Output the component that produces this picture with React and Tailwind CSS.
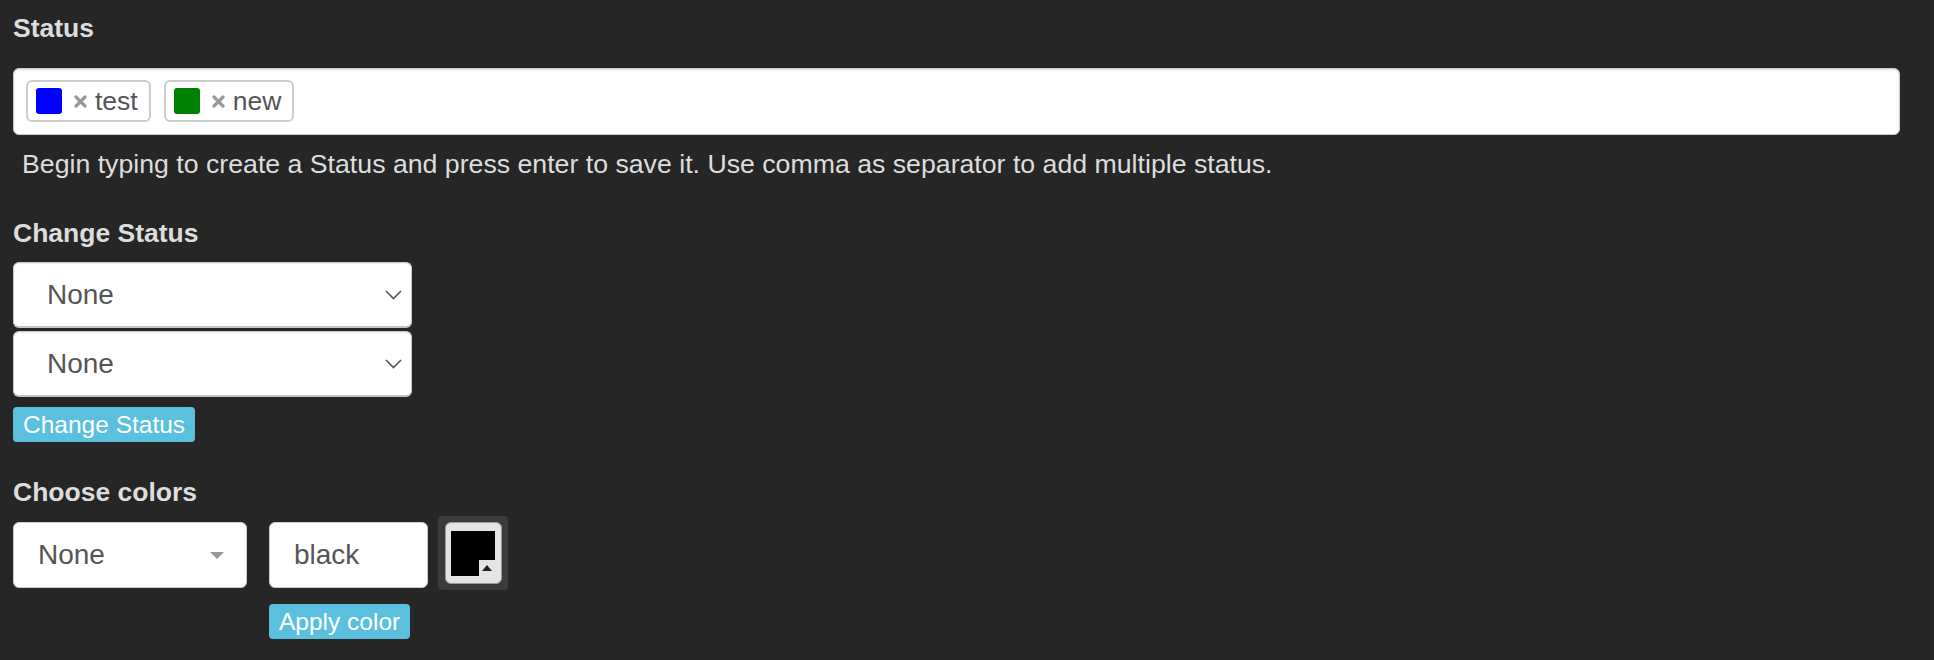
import React from 'react';

const font = "font-['Liberation_Sans',Arial,Helvetica,sans-serif]";

const Tag = ({ color, label }) => (
    <div className="flex h-[42px] items-center rounded-[6px] border-2 border-[#cccccc] bg-white pl-[8px] pr-[11px]">
        <span className={`h-[26px] w-[26px] rounded-[3px] ${color}`}></span>
        <svg width="13" height="13" viewBox="0 0 13 13" className="ml-[12px]">
            <path d="M2 2 L11 11 M11 2 L2 11" stroke="#999999" strokeWidth="3.2" strokeLinecap="round" />
        </svg>
        <span className="ml-[8px] text-[26.5px] leading-none text-[#555555]">{label}</span>
    </div>
);

const Chevron = () => (
    <svg width="17" height="10" viewBox="0 0 17 10" className="shrink-0">
        <polyline points="1,1 8.5,8.5 16,1" fill="none" stroke="#555555" strokeWidth="1.6" />
    </svg>
);

const StatusSelect = () => (
    <div className="flex h-[66px] w-[399px] items-center justify-between rounded-[6px] border border-[#cccccc] border-b-2 border-b-[#c4c4c4] bg-white pl-[33px] pr-[9px] shadow-[inset_0_1px_1px_rgba(0,0,0,0.08)]">
        <span className="text-[28px] leading-none text-[#555555]">None</span>
        <Chevron />
    </div>
);

const InfoButton = ({ children }) => (
    <button className="h-[35px] rounded-[4px] bg-[#5bc0de] px-[10px] text-[24.5px] leading-[35px] text-white">
        {children}
    </button>
);

const ColorPicker = () => (
    <div className="flex h-[74px] w-[70px] items-center justify-center rounded-[4px] bg-[#3b3b3b]">
        <div className="flex h-[62px] w-[57px] items-center justify-center rounded-[6px] border border-[#9a9a9a] bg-[#e4e4e4]">
            <div className="flex h-[45px] w-[44px] flex-col">
                <div className="h-[29px] bg-black"></div>
                <div className="flex h-[16px]">
                    <div className="w-[28px] bg-black"></div>
                    <div className="flex flex-1 items-center justify-center">
                        <svg width="10" height="6" viewBox="0 0 10 6">
                            <polygon points="5,0 10,6 0,6" fill="#222222" />
                        </svg>
                    </div>
                </div>
            </div>
        </div>
    </div>
);

const App = () => {
    return (
        <div className={`min-h-[660px] bg-[#262626] pl-[13px] pr-[34px] pt-[13px] ${font}`}>
            <h3 className="text-[26.5px] font-bold leading-[30px] text-[#dddddd]">Status</h3>
            <div className="mt-[25px] flex h-[67px] items-start gap-[13px] rounded-[6px] border border-[#cccccc] bg-white pl-[12px] pt-[11px] shadow-[inset_0_1px_2px_rgba(0,0,0,0.12)]">
                <Tag color="bg-[#0000ff]" label="test" />
                <Tag color="bg-[#008000]" label="new" />
            </div>
            <p className="mt-[14px] pl-[9px] text-[26.7px] leading-[30px] text-[#dddddd]">
                Begin typing to create a Status and press enter to save it. Use comma as separator to add multiple status.
            </p>

            <h3 className="mt-[39px] text-[26.5px] font-bold leading-[30px] text-[#dddddd]">Change Status</h3>
            <div className="mt-[14px] flex flex-col gap-[3px]">
                <StatusSelect />
                <StatusSelect />
            </div>
            <div className="mt-[10px]">
                <InfoButton>Change Status</InfoButton>
            </div>

            <h3 className="mt-[35px] text-[26.5px] font-bold leading-[30px] text-[#dddddd]">Choose colors</h3>
            <div className="mt-[9px] flex items-start">
                <div className="mt-[6px] flex h-[66px] w-[234px] items-center justify-between rounded-[6px] border border-[#cccccc] bg-white pl-[24px] pr-[22px]">
                    <span className="text-[28px] leading-none text-[#555555]">None</span>
                    <svg width="14" height="7" viewBox="0 0 14 7">
                        <polygon points="0,0 14,0 7,7" fill="#999999" />
                    </svg>
                </div>
                <div className="ml-[22px] flex flex-col items-start">
                    <div className="mt-[6px] flex h-[66px] w-[159px] items-center rounded-[6px] border border-[#cccccc] bg-white pl-[24px]">
                        <span className="text-[28px] leading-none text-[#555555]">black</span>
                    </div>
                    <div className="mt-[16px]">
                        <InfoButton>Apply color</InfoButton>
                    </div>
                </div>
                <div className="ml-[10px]">
                    <ColorPicker />
                </div>
            </div>
        </div>
    );
};

export default App;
